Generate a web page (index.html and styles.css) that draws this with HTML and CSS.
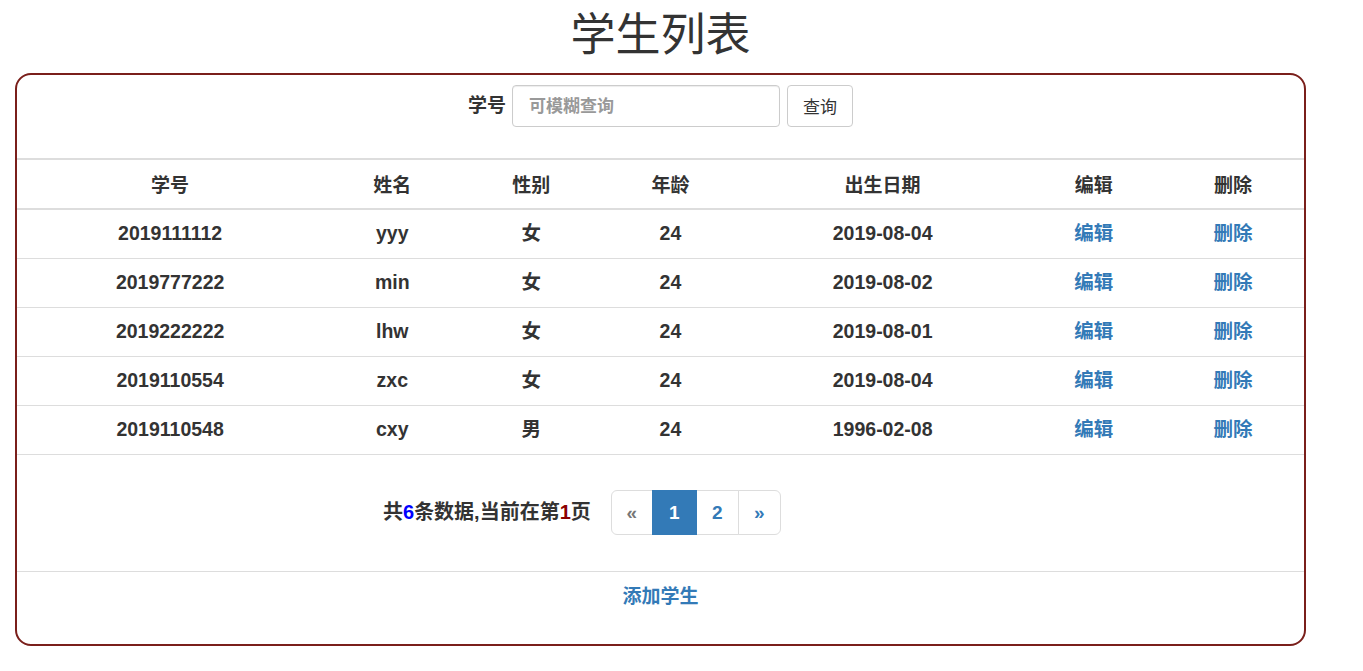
FILE: index.html
```html
<!DOCTYPE html>
<html lang="zh-CN">
<head>
<meta charset="utf-8">
<title>学生列表</title>
<link rel="stylesheet" href="styles.css">
</head>
<body>
<div class="page">
  <h1 class="title">学生列表</h1>
  <div class="panel">
    <form class="search">
      <label class="search-label">学号</label>
      <input class="search-input" type="text" placeholder="可模糊查询">
      <button class="search-btn" type="button">查询</button>
    </form>
    <table class="list">
      <colgroup>
        <col class="c1"><col class="c2"><col class="c3"><col class="c4"><col class="c5"><col class="c6"><col class="c7">
      </colgroup>
      <thead>
        <tr><th>学号</th><th>姓名</th><th>性别</th><th>年龄</th><th>出生日期</th><th>编辑</th><th>删除</th></tr>
      </thead>
      <tbody>
        <tr><td>2019111112</td><td>yyy</td><td>女</td><td>24</td><td>2019-08-04</td><td><a class="link" href="#">编辑</a></td><td><a class="link" href="#">删除</a></td></tr>
        <tr><td>2019777222</td><td>min</td><td>女</td><td>24</td><td>2019-08-02</td><td><a class="link" href="#">编辑</a></td><td><a class="link" href="#">删除</a></td></tr>
        <tr><td>2019222222</td><td>lhw</td><td>女</td><td>24</td><td>2019-08-01</td><td><a class="link" href="#">编辑</a></td><td><a class="link" href="#">删除</a></td></tr>
        <tr><td>2019110554</td><td>zxc</td><td>女</td><td>24</td><td>2019-08-04</td><td><a class="link" href="#">编辑</a></td><td><a class="link" href="#">删除</a></td></tr>
        <tr><td>2019110548</td><td>cxy</td><td>男</td><td>24</td><td>1996-02-08</td><td><a class="link" href="#">编辑</a></td><td><a class="link" href="#">删除</a></td></tr>
      </tbody>
    </table>
    <div class="pager-row">
      <div class="count">共<span class="num-blue">6</span>条数据,当前在第<span class="num-red">1</span>页</div>
      <ul class="pagination">
        <li class="pg-item disabled"><span>&laquo;</span></li>
        <li class="pg-item active"><span>1</span></li>
        <li class="pg-item"><a href="#">2</a></li>
        <li class="pg-item"><a href="#">&raquo;</a></li>
      </ul>
    </div>
    <div class="footer">
      <a class="link add" href="#">添加学生</a>
    </div>
  </div>
</div>
</body>
</html>
```

FILE: styles.css
```css
* { box-sizing: border-box; }
html, body { margin: 0; padding: 0; background: #fff; }
body {
  font-family: "Liberation Sans", "Noto Sans CJK SC", sans-serif;
  color: #333;
  font-size: 18px;
}
.page {
  width: 1291px;
  margin-left: 15px;
}
.title {
  margin: 0;
  height: 73px;
  line-height: 72px;
  text-align: center;
  font-size: 45px;
  font-weight: 400;
  color: #333;
}
.panel {
  border: 2px solid #7a1f1b;
  border-radius: 16px;
  padding: 10px 0 24px;
}
.search {
  display: flex;
  justify-content: center;
  align-items: center;
  height: 42px;
  margin: 0 0 31px;
}
.search-label {
  font-weight: 700;
  font-size: 19px;
  margin-right: 6px;
  margin-bottom: 5px;
}
.search-input {
  width: 268px;
  height: 42px;
  border: 1px solid #ccc;
  border-radius: 4px;
  padding: 2px 16px 0;
  font-family: inherit;
  font-size: 17px;
  font-weight: 700;
  color: #555;
  box-shadow: inset 0 1px 1px rgba(0,0,0,.075);
  margin-right: 7px;
}
.search-input::placeholder { color: #999; }
.search-btn {
  width: 66px;
  height: 42px;
  border: 1px solid #ccc;
  border-radius: 4px;
  background: #fff;
  font-family: inherit;
  font-size: 17px;
  color: #333;
  padding: 0 0 2px;
}
.list {
  width: 100%;
  table-layout: fixed;
  border-collapse: separate;
  border-spacing: 0;
  border-top: 2px solid #ddd;
}
.c1 { width: 306px; }
.c2 { width: 138px; }
.c3 { width: 140px; }
.c4 { width: 138px; }
.c5 { width: 286px; }
.c6 { width: 136px; }
.c7 { width: 142px; }
.list th, .list td {
  padding: 1px 0 0;
  height: 49px;
  line-height: 44px;
  text-align: center;
  font-size: 19.5px;
  font-weight: 700;
  color: #333;
  vertical-align: top;
  white-space: nowrap;
}
.list th {
  padding-top: 4px;
  height: 50px;
  font-size: 19px;
  border-bottom: 2px solid #ddd;
}
.list td { border-bottom: 1px solid #ddd; }
.link { color: #337ab7; text-decoration: none; font-weight: 700; }
.pager-row {
  display: flex;
  align-items: center;
  padding-left: 366px;
  margin: 35px 0 36px;
  height: 45px;
}
.count {
  font-size: 20px;
  font-weight: 700;
  color: #333;
  margin-right: 20px;
  margin-top: -4px;
}
.num-blue { color: #0000ff; }
.num-red { color: #8b0000; }
.pagination {
  display: flex;
  list-style: none;
  margin: 0;
  padding: 0;
}
.pg-item span, .pg-item a {
  display: block;
  width: 43px;
  height: 45px;
  line-height: 44px;
  text-align: center;
  border: 1px solid #ddd;
  margin-left: -1px;
  font-size: 19px;
  font-weight: 700;
  color: #337ab7;
  text-decoration: none;
  background: #fff;
}
.pg-item:first-child span { width: 42px; margin-left: 0; border-radius: 6px 0 0 6px; }
.pg-item:last-child a { border-radius: 0 6px 6px 0; }
.pg-item.disabled span { color: #777; }
.pg-item.active span {
  width: 45px;
  background: #337ab7;
  border-color: #337ab7;
  color: #fff;
  position: relative;
  z-index: 1;
}
.footer {
  border-top: 1px solid #ddd;
  padding-top: 2px;
  height: 49px;
  line-height: 46px;
  text-align: center;
}
.add { font-size: 19px; }
```
